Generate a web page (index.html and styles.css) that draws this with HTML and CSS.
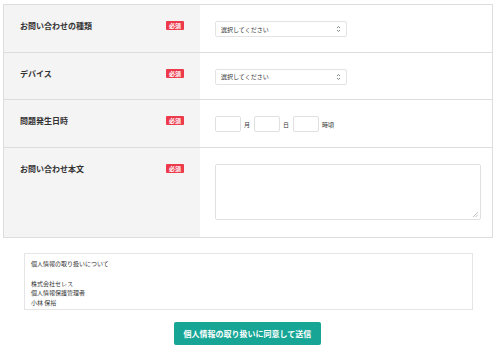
FILE: index.html
```html
<!DOCTYPE html>
<html lang="ja">
<head>
    <meta charset="UTF-8">
    <meta name="viewport" content="width=device-width, initial-scale=1.0">
    <title>お問い合わせ</title>
    <link rel="stylesheet" href="styles.css">
</head>
<body>
    <div class="container">
        <div class="form-table">
            <div class="form-row">
                <div class="form-label">
                    <span>お問い合わせの種類</span>
                    <span class="required">必須</span>
                </div>
                <div class="form-field">
                    <div class="select-box">
                        <span>選択してください</span>
                        <svg class="select-arrow" width="5" height="8" viewBox="0 0 5 8">
                            <path d="M1 3 L2.5 1.5 L4 3 M1 5 L2.5 6.5 L4 5" fill="none" stroke="#7a8a85" stroke-width="1"/>
                        </svg>
                    </div>
                </div>
            </div>
            <div class="form-row">
                <div class="form-label">
                    <span>デバイス</span>
                    <span class="required">必須</span>
                </div>
                <div class="form-field">
                    <div class="select-box">
                        <span>選択してください</span>
                        <svg class="select-arrow" width="5" height="8" viewBox="0 0 5 8">
                            <path d="M1 3 L2.5 1.5 L4 3 M1 5 L2.5 6.5 L4 5" fill="none" stroke="#7a8a85" stroke-width="1"/>
                        </svg>
                    </div>
                </div>
            </div>
            <div class="form-row">
                <div class="form-label">
                    <span>問題発生日時</span>
                    <span class="required">必須</span>
                </div>
                <div class="form-field date-field">
                    <div class="small-input"></div>
                    <span>月</span>
                    <div class="small-input"></div>
                    <span>日</span>
                    <div class="small-input"></div>
                    <span>時頃</span>
                </div>
            </div>
            <div class="form-row">
                <div class="form-label">
                    <span>お問い合わせ本文</span>
                    <span class="required">必須</span>
                </div>
                <div class="form-field">
                    <div class="text-area">
                        <svg class="resize-grip" width="5" height="5" viewBox="0 0 5 5">
                            <path d="M5 0 L0 5 M5 2.5 L2.5 5" stroke="#b5b5b5" stroke-width="0.8"/>
                        </svg>
                    </div>
                </div>
            </div>
        </div>

        <div class="privacy-box">
            <p>個人情報の取り扱いについて</p>
            <p>&nbsp;</p>
            <p>株式会社セレス</p>
            <p>個人情報保護管理者</p>
            <p>小林 保裕</p>
            <p>&nbsp;</p>
        </div>

        <div class="submit-wrap">
            <a class="submit-button">個人情報の取り扱いに同意して送信</a>
        </div>
    </div>
</body>
</html>
```
FILE: styles.css
```css
body {
    font-family: "Noto Sans CJK JP", "Noto Sans", sans-serif;
    margin: 0;
    padding: 0;
    color: #333;
    background-color: #fff;
}
.container {
    width: 490px;
    margin: 0 0 0 3px;
    padding-top: 4px;
}
.form-table {
    border: 1px solid #ddd;
    border-bottom: none;
}
.form-row {
    display: flex;
    border-bottom: 1px solid #ddd;
}
.form-label {
    width: 164px;
    flex-shrink: 0;
    display: flex;
    justify-content: space-between;
    align-items: flex-start;
    padding: 16px 16px 0 16px;
    background-color: #f4f4f4;
    font-size: 8px;
    font-weight: bold;
    line-height: 10px;
}
.required {
    display: inline-block;
    width: 18px;
    height: 9px;
    background-color: #ec3a4c;
    color: #fff;
    font-size: 6px;
    line-height: 9px;
    text-align: center;
    border-radius: 1px;
    font-weight: bold;
}
.form-field {
    flex-grow: 1;
    padding: 16px 11px 14.5px 15px;
}
.select-box {
    width: 132px;
    height: 16px;
    box-sizing: border-box;
    border: 1px solid #e3e3e3;
    border-radius: 2px;
    display: flex;
    align-items: center;
    justify-content: space-between;
    padding: 0 5px 0 5px;
    font-size: 6px;
    color: #333;
}
.select-arrow {
    display: block;
}
.date-field {
    display: flex;
    align-items: center;
    font-size: 6px;
}
.small-input {
    width: 26px;
    height: 16px;
    box-sizing: border-box;
    border: 1px solid #e0e0e0;
    border-radius: 2px;
}
.date-field span {
    margin: 0 4px 0 3px;
}
.text-area {
    width: 266px;
    height: 56px;
    box-sizing: border-box;
    border: 1px solid #e0e0e0;
    border-radius: 2px;
    position: relative;
    margin-bottom: 3px;
}
.resize-grip {
    position: absolute;
    right: 2px;
    bottom: 2px;
}
.privacy-box {
    margin: 15px 20px 0 21px;
    height: 57px;
    box-sizing: border-box;
    border: 1px solid #e5e5e5;
    overflow: hidden;
    padding: 5px 6px;
    font-size: 6px;
    line-height: 9.8px;
}
.privacy-box p {
    margin: 0;
}
.submit-wrap {
    text-align: center;
    margin-top: 8px;
    padding-right: 1px;
}
.submit-button {
    display: inline-block;
    width: 147px;
    height: 23px;
    line-height: 23px;
    background-color: #17a696;
    color: #fff;
    font-size: 8px;
    font-weight: bold;
    border-radius: 2px;
    text-decoration: none;
}
```
